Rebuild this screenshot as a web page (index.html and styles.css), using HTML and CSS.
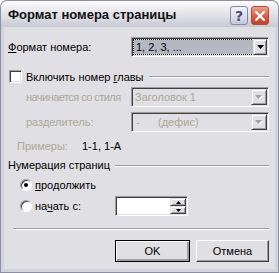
FILE: index.html
```html
<!DOCTYPE html>
<html lang="ru">
<head>
    <meta charset="UTF-8">
    <title>Формат номера страницы</title>
    <link rel="stylesheet" href="styles.css">
</head>
<body>

    <div class="window">
        <div class="titlebar">
            <span class="title">Формат номера страницы</span>
            <span class="cap-btn help">?</span>
            <span class="cap-btn close">
                <svg width="10" height="10" viewBox="0 0 10 10"><path d="M1 1 L9 9 M9 1 L1 9" stroke="#fff" stroke-width="2.2" stroke-linecap="square"/></svg>
            </span>
        </div>
        <div class="frame">
            <div class="client">

                <div class="row">
                    <span class="label"><u>Ф</u>ормат номера:</span>
                    <div class="combo">
                        <div class="combo-text"><span class="sel">1, 2, 3, ...</span></div>
                        <div class="combo-btn"><svg width="7" height="4" viewBox="0 0 7 4"><polygon points="0,0 7,0 3.5,4" fill="#000"/></svg></div>
                    </div>
                </div>

                <div class="group-head chapter">
                    <span class="check"></span>
                    <span class="group-title">Включить номер <u>г</u>лавы</span>
                    <span class="rule"></span>
                </div>

                <div class="row disabled first">
                    <span class="label narrow">начинается со стиля</span>
                    <div class="combo off">
                        <div class="combo-text">Заголовок 1</div>
                        <div class="combo-btn"><svg width="8" height="5" viewBox="0 0 8 5"><polygon points="1,1 8,1 4.5,5" fill="#fff"/><polygon points="0,0 7,0 3.5,4" fill="#a0a0a4"/></svg></div>
                    </div>
                </div>

                <div class="row disabled second">
                    <span class="label">разделитель:</span>
                    <div class="combo off">
                        <div class="combo-text"><span class="dash">-</span>(дефис)</div>
                        <div class="combo-btn"><svg width="8" height="5" viewBox="0 0 8 5"><polygon points="1,1 8,1 4.5,5" fill="#fff"/><polygon points="0,0 7,0 3.5,4" fill="#a0a0a4"/></svg></div>
                    </div>
                </div>

                <div class="examples">
                    <span class="ex-label">Примеры:</span>
                    <span>1-1, 1-А</span>
                </div>

                <div class="group-head numbering">
                    <span class="group-title">Нумерация страниц</span>
                    <span class="rule"></span>
                </div>

                <div class="radio-row">
                    <span class="radio checked"></span>
                    <span><u>п</u>родолжить</span>
                </div>

                <div class="radio-row start">
                    <div class="radio-item">
                        <span class="radio"></span>
                        <span>на<u>ч</u>ать с:</span>
                    </div>
                    <div class="spin">
                        <div class="spin-field"></div>
                        <div class="spin-btns">
                            <div class="spin-btn"><svg width="5" height="3" viewBox="0 0 5 3"><polygon points="2.5,0 5,3 0,3" fill="#000"/></svg></div>
                            <div class="spin-btn"><svg width="5" height="3" viewBox="0 0 5 3"><polygon points="0,0 5,0 2.5,3" fill="#000"/></svg></div>
                        </div>
                    </div>
                </div>

                <div class="separator"></div>

                <div class="buttons">
                    <button class="btn default">OK</button>
                    <button class="btn cancel">Отмена</button>
                </div>

            </div>
        </div>
    </div>

</body>
</html>
```

FILE: styles.css
```css
body {
    margin: 0;
    background: #fff;
    font-family: "Liberation Sans", Arial, sans-serif;
    font-size: 11px;
    color: #000;
}
u {
    text-decoration: underline;
    text-underline-offset: 1px;
}
.window {
    width: 279px;
    height: 273px;
    box-sizing: border-box;
    display: flex;
    flex-direction: column;
}
.titlebar {
    height: 27px;
    flex: none;
    display: flex;
    align-items: center;
    padding: 0 9px 0 7px;
    border: 1px solid #8f8fa3;
    border-bottom: none;
    border-radius: 7px 7px 0 0;
    background: linear-gradient(#ffffff, #eeeef3 25%, #dcdce4 65%, #c9c9d5);
    box-sizing: border-box;
}
.title {
    flex: 1;
    font-weight: bold;
    font-size: 13px;
    color: #111;
    padding-top: 1px;
    white-space: nowrap;
}
.cap-btn {
    width: 18px;
    height: 19px;
    box-sizing: border-box;
    border-radius: 3px;
    display: flex;
    align-items: center;
    justify-content: center;
    margin-top: 3px;
}
.help {
    margin-right: 3px;
    border: 1px solid #8686a2;
    background: linear-gradient(#f4f4fa, #c9c9dc);
    color: #4d4d6e;
    font-weight: bold;
    font-size: 14px;
    font-family: "DejaVu Sans", sans-serif;
}
.close {
    border: 1px solid #b24a34;
    background: linear-gradient(#f0a08a, #d9593c 60%, #c2432a);
}
.frame {
    flex: 1;
    display: flex;
    padding: 0 3px 3px 3px;
    border: 1px solid #8f8fa3;
    border-top: none;
    background: #d3d3dd;
}
.client {
    flex: 1;
    background: #e0dfe3;
    padding: 10px 6px 0 4px;
    display: flex;
    flex-direction: column;
}
.row {
    display: flex;
    align-items: center;
    height: 20px;
}
.label {
    white-space: nowrap;
    flex: none;
}
.label.narrow {
    letter-spacing: -0.55px;
}
.combo {
    margin-left: auto;
    width: 138px;
    height: 20px;
    flex: none;
    box-sizing: border-box;
    display: flex;
    padding: 1px;
    border: 1px solid;
    border-color: #9d9da1 #fff #fff #9d9da1;
    box-shadow: inset 1px 1px #404040, inset -1px -1px #e0dfe3;
    background: #fff;
}
.combo.off {
    background: #e0dfe3;
    color: #aca899;
}
.combo-text {
    flex: 1;
    display: flex;
    align-items: center;
    padding-left: 2px;
    white-space: nowrap;
}
.sel {
    display: flex;
    align-items: center;
    height: 14px;
    width: 117px;
    margin-left: -1px;
    padding-left: 2px;
    background: #b5b7c3;
    outline: 1px dotted #000;
}
.dash {
    width: 22px;
    padding-left: 1px;
}
.combo-btn {
    width: 16px;
    box-sizing: border-box;
    display: flex;
    align-items: center;
    justify-content: center;
    background: #e0dfe3;
    border: 1px solid;
    border-color: #e0dfe3 #404040 #404040 #e0dfe3;
    box-shadow: inset 1px 1px #fff, inset -1px -1px #9d9da1;
}
.group-head {
    display: flex;
    align-items: center;
    height: 13px;
    white-space: nowrap;
}
.chapter {
    margin-top: 13px;
}
.check {
    width: 13px;
    height: 13px;
    box-sizing: border-box;
    margin-left: 1px;
    margin-right: 4px;
    background: #fff;
    border: 1px solid;
    border-color: #9d9da1 #fff #fff #9d9da1;
    box-shadow: inset 1px 1px #404040, inset -1px -1px #e0dfe3;
}
.rule {
    flex: 1;
    margin-left: 5px;
    border-top: 1px solid #9d9da1;
    border-bottom: 1px solid #fff;
    margin-top: 1px;
}
.disabled .label {
    color: #aca899;
    padding-left: 18px;
}
.first {
    margin-top: 4px;
}
.second {
    margin-top: 5px;
}
.examples {
    display: flex;
    align-items: center;
    height: 14px;
    margin-top: 7px;
}
.ex-label {
    color: #aca899;
    width: 74px;
    padding-left: 9px;
    box-sizing: border-box;
}
.numbering {
    margin-top: 5px;
    height: 14px;
}
.radio-row {
    display: flex;
    align-items: center;
    height: 13px;
    margin-top: 6px;
    padding-left: 12px;
    white-space: nowrap;
}
.radio-row.start {
    height: 20px;
    margin-top: 5px;
}
.radio-item {
    width: 95px;
    display: flex;
    align-items: center;
}
.radio {
    width: 12px;
    height: 12px;
    box-sizing: border-box;
    border-radius: 50%;
    margin-right: 3px;
    background: #fff;
    border: 1px solid;
    border-color: #9d9da1 #fff #fff #9d9da1;
    box-shadow: inset 1px 1px #404040;
    display: flex;
    align-items: center;
    justify-content: center;
}
.radio.checked::after {
    content: "";
    width: 4px;
    height: 4px;
    border-radius: 50%;
    background: #000;
}
.spin {
    width: 73px;
    height: 20px;
    box-sizing: border-box;
    display: flex;
    padding: 1px;
    border: 1px solid;
    border-color: #9d9da1 #fff #fff #9d9da1;
    box-shadow: inset 1px 1px #404040, inset -1px -1px #e0dfe3;
    background: #fff;
}
.spin-field {
    flex: 1;
}
.spin-btns {
    width: 16px;
    display: flex;
    flex-direction: column;
}
.spin-btn {
    flex: 1;
    box-sizing: border-box;
    display: flex;
    align-items: center;
    justify-content: center;
    background: #e0dfe3;
    border: 1px solid;
    border-color: #e0dfe3 #404040 #404040 #e0dfe3;
    box-shadow: inset 1px 1px #fff, inset -1px -1px #9d9da1;
}
.separator {
    margin-top: 12px;
    margin-left: 5px;
    border-top: 1px solid #9d9da1;
    border-bottom: 1px solid #fff;
}
.buttons {
    display: flex;
    justify-content: flex-end;
    gap: 6px;
    margin-top: 10px;
}
.btn {
    height: 22px;
    box-sizing: border-box;
    font-family: "Liberation Sans", Arial, sans-serif;
    font-size: 11px;
    color: #000;
    background: #e0dfe3;
    border: 1px solid;
    border-color: #fff #404040 #404040 #fff;
    box-shadow: inset -1px -1px #9d9da1;
    padding: 0;
}
.btn.default {
    width: 75px;
    border: 1px solid #000;
    box-shadow: inset 1px 1px #fff, inset -2px -2px #9d9da1, inset -1px -1px #404040;
}
.btn.cancel {
    width: 73px;
}
```
